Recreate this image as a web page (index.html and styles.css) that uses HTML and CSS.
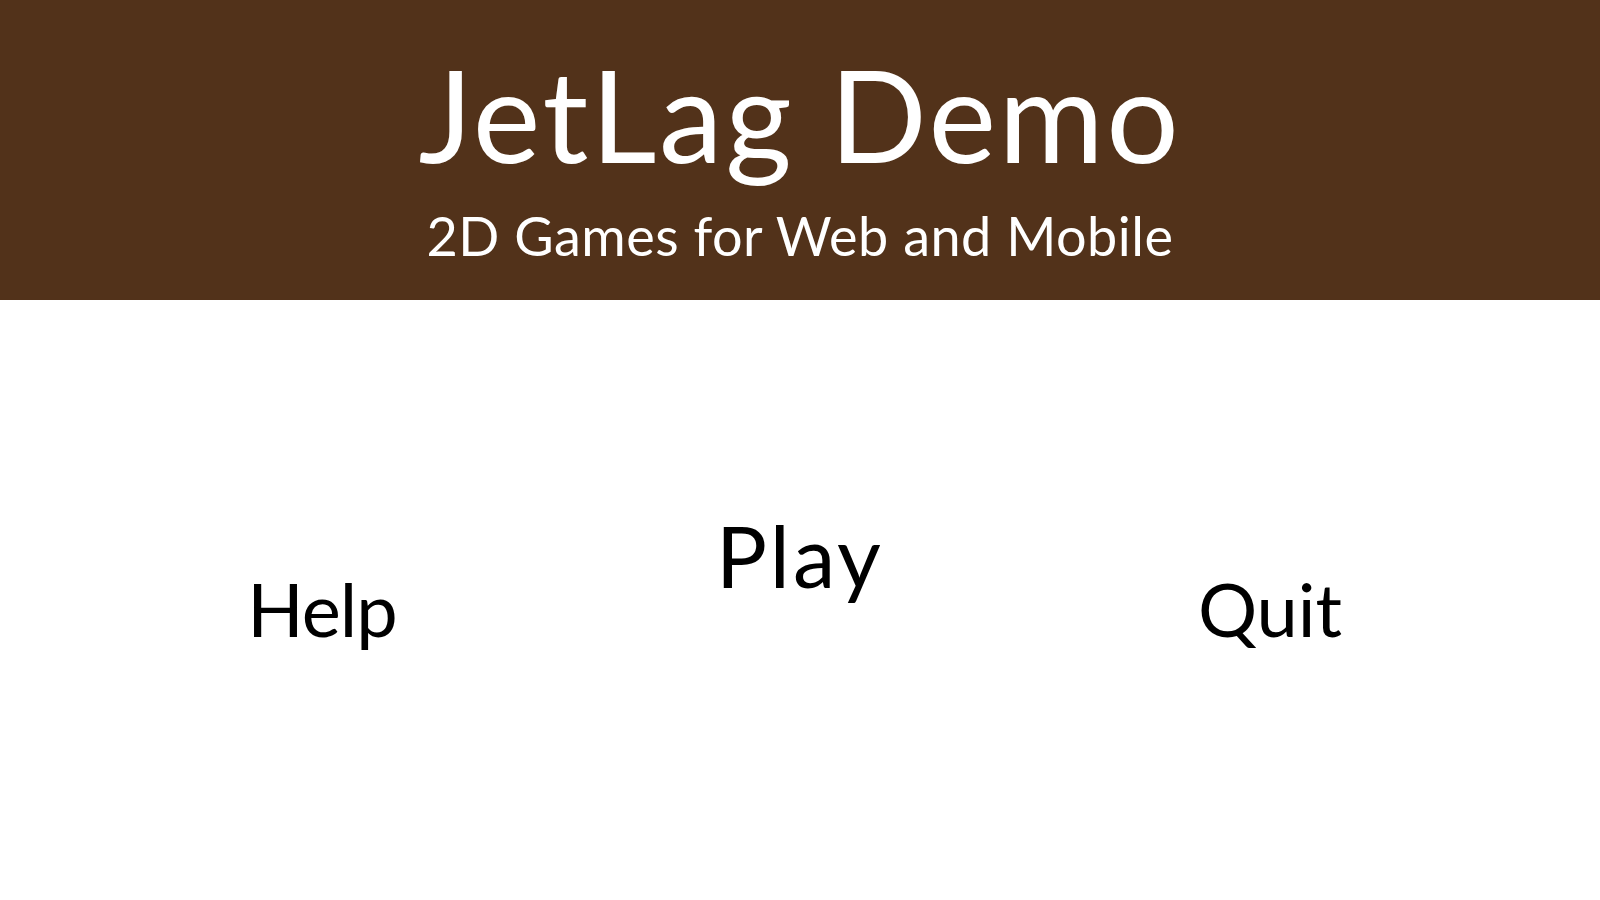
FILE: index.html
```html
<!DOCTYPE html>
<html lang="en">
<head>
<meta charset="utf-8">
<title>JetLag Demo</title>
<link rel="stylesheet" href="styles.css">
</head>
<body>
  <header class="banner">
    <h1 class="title">JetLag Demo</h1>
    <p class="subtitle">2D Games for Web and Mobile</p>
  </header>
  <main class="menu">
    <div class="item item-help">Help</div>
    <div class="item item-play">Play</div>
    <div class="item item-quit">Quit</div>
  </main>
</body>
</html>
```
FILE: styles.css
```css
* { box-sizing: border-box; }
html, body {
  margin: 0;
  padding: 0;
  width: 1600px;
  height: 900px;
  overflow: hidden;
  background: #ffffff;
  font-family: Lato, "Open Sans", "Liberation Sans", sans-serif;
}
.banner {
  height: 300px;
  background: #52321a;
  color: #ffffff;
  display: flex;
  flex-direction: column;
  align-items: center;
  padding-top: 44px;
}
.title {
  margin: 0;
  font-weight: 400;
  font-size: 128px;
  line-height: 140px;
  letter-spacing: 2.5px;
}
.subtitle {
  margin: 0;
  margin-top: 20px;
  font-size: 54px;
  line-height: 64px;
  letter-spacing: 0.5px;
}
.menu {
  display: grid;
  grid-template-columns: 644px 312px 644px;
  align-items: start;
  color: #000000;
}
.item {
  text-align: center;
  font-size: 74px;
  line-height: 100px;
}
.item-help { margin-top: 259px; letter-spacing: -1px; }
.item-play { margin-top: 205px; font-size: 85px; letter-spacing: 3px; }
.item-quit { margin-top: 259px; padding-right: 16px; }
```
